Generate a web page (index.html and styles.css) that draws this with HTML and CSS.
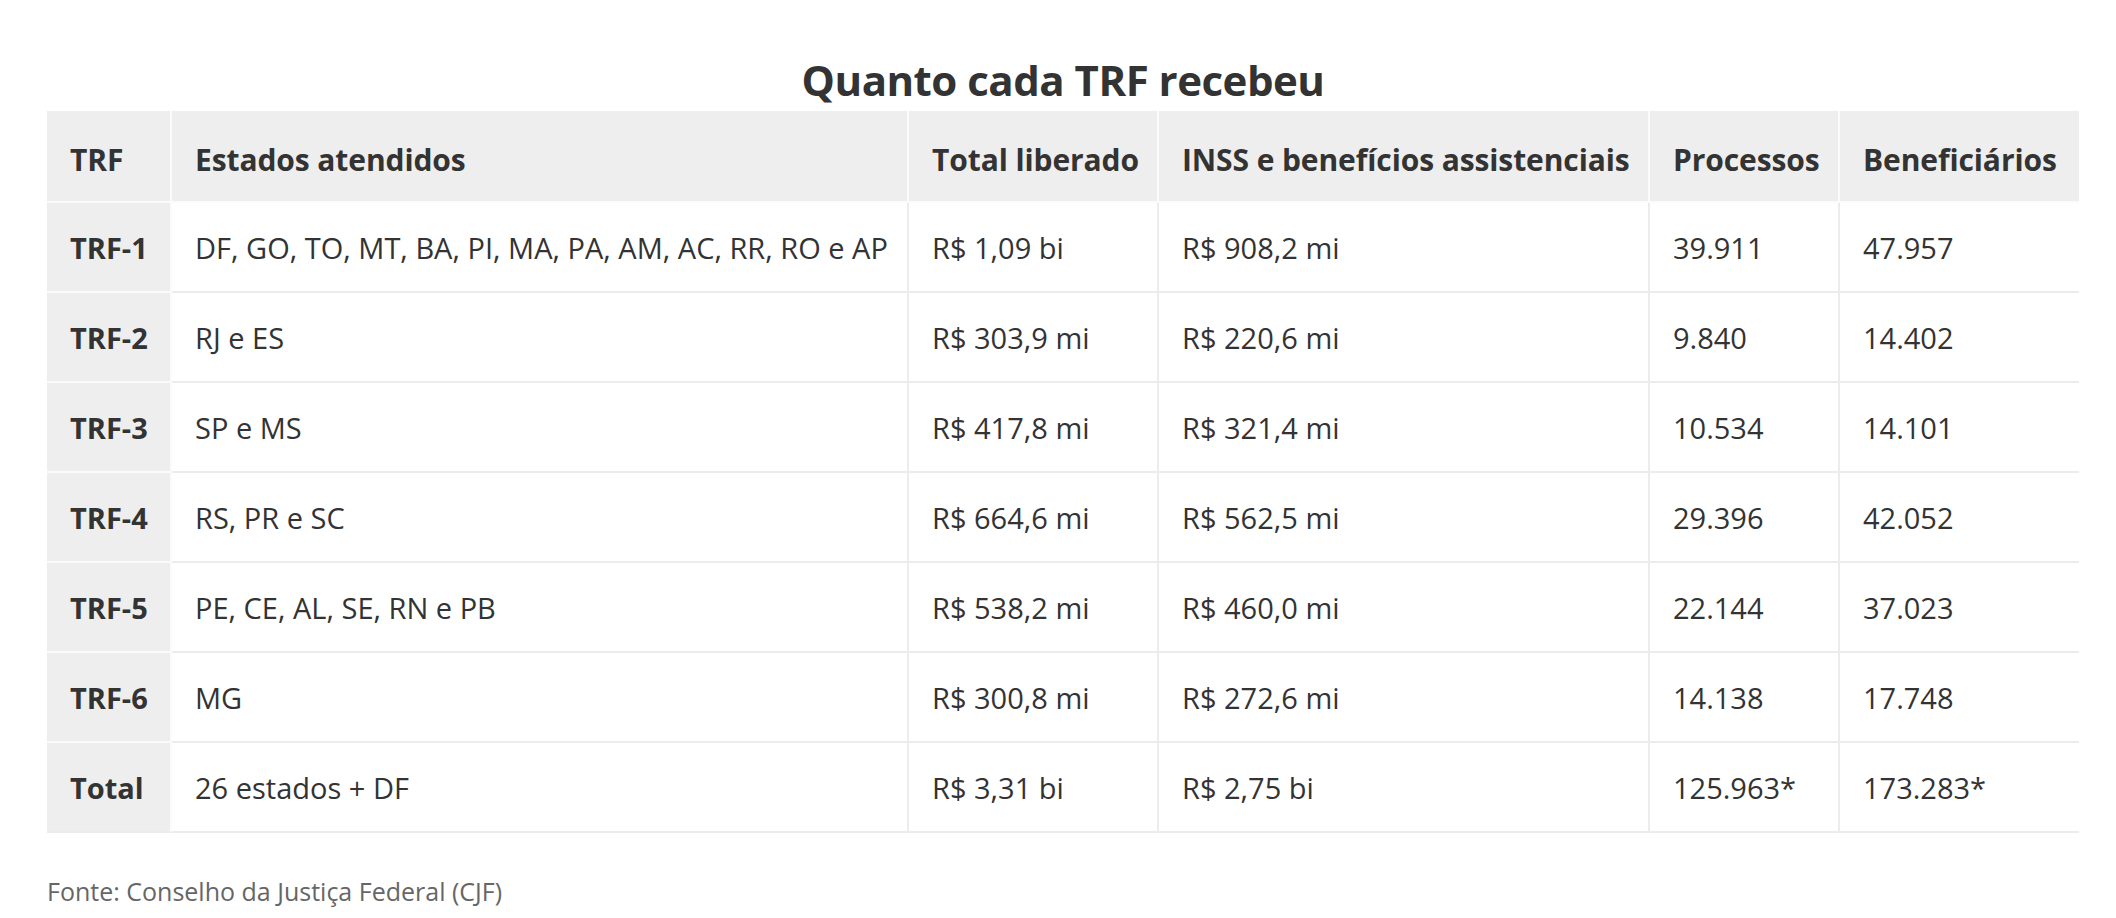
FILE: index.html
```html
<!DOCTYPE html>
<html lang="pt-BR">
<head>
<meta charset="utf-8">
<title>Quanto cada TRF recebeu</title>
<link rel="stylesheet" href="styles.css">
</head>
<body>
<div class="wrap">
  <h1 class="title">Quanto cada TRF recebeu</h1>
  <table class="tbl">
    <colgroup>
      <col class="c1"><col class="c2"><col class="c3"><col class="c4"><col class="c5"><col class="c6">
    </colgroup>
    <thead>
      <tr><th>TRF</th><th>Estados atendidos</th><th>Total liberado</th><th>INSS e benefícios assistenciais</th><th>Processos</th><th>Beneficiários</th></tr>
    </thead>
    <tbody>
      <tr><td class="rh">TRF-1</td><td>DF, GO, TO, MT, BA, PI, MA, PA, AM, AC, RR, RO e AP</td><td>R$ 1,09 bi</td><td>R$ 908,2 mi</td><td>39.911</td><td>47.957</td></tr>
      <tr><td class="rh">TRF-2</td><td>RJ e ES</td><td>R$ 303,9 mi</td><td>R$ 220,6 mi</td><td>9.840</td><td>14.402</td></tr>
      <tr><td class="rh">TRF-3</td><td>SP e MS</td><td>R$ 417,8 mi</td><td>R$ 321,4 mi</td><td>10.534</td><td>14.101</td></tr>
      <tr><td class="rh">TRF-4</td><td>RS, PR e SC</td><td>R$ 664,6 mi</td><td>R$ 562,5 mi</td><td>29.396</td><td>42.052</td></tr>
      <tr><td class="rh">TRF-5</td><td>PE, CE, AL, SE, RN e PB</td><td>R$ 538,2 mi</td><td>R$ 460,0 mi</td><td>22.144</td><td>37.023</td></tr>
      <tr><td class="rh">TRF-6</td><td>MG</td><td>R$ 300,8 mi</td><td>R$ 272,6 mi</td><td>14.138</td><td>17.748</td></tr>
      <tr><td class="rh">Total</td><td>26 estados + DF</td><td>R$ 3,31 bi</td><td>R$ 2,75 bi</td><td>125.963*</td><td>173.283*</td></tr>
    </tbody>
  </table>
  <p class="source">Fonte: Conselho da Justiça Federal (CJF)</p>
</div>
</body>
</html>
```
FILE: styles.css
```css
html, body {
  margin: 0;
  padding: 0;
  background: #ffffff;
}
body {
  font-family: "Open Sans", "Liberation Sans", sans-serif;
  color: #333333;
}
.wrap {
  width: 2032px;
  margin-left: 47px;
  padding-top: 55px;
}
.title {
  margin: 0;
  height: 56px;
  font-size: 42px;
  line-height: 50px;
  font-weight: 700;
  text-align: center;
  letter-spacing: -0.5px;
  color: #333333;
}
.tbl {
  width: 2032px;
  table-layout: fixed;
  border-collapse: separate;
  border-spacing: 0;
}
.c1 { width: 125px; }
.c2 { width: 737px; }
.c3 { width: 250px; }
.c4 { width: 491px; }
.c5 { width: 190px; }
.c6 { width: 239px; }
.tbl th,
.tbl td {
  text-align: left;
  vertical-align: middle;
  padding: 0 0 0 23px;
  white-space: nowrap;
  font-size: 29px;
}
.tbl th {
  height: 84px;
  padding-top: 6px;
  background: #eeeeee;
  font-weight: 700;
  font-size: 30px;
  letter-spacing: -0.1px;
  border-right: 2px solid #fbfbfb;
  border-bottom: 2px solid #fbfbfb;
}
.tbl td {
  height: 88px;
  font-weight: 400;
  border-right: 2px solid #ececec;
  border-bottom: 2px solid #ececec;
}
.tbl th:last-child,
.tbl td:last-child {
  border-right: none;
}
.tbl td.rh {
  background: #eeeeee;
  font-weight: 700;
  border-right: 2px solid #fbfbfb;
  border-bottom: 2px solid #fbfbfb;
}
.tbl tbody tr:last-child td.rh {
  border-bottom: 2px solid #ececec;
}
.source {
  margin: 42px 0 0 0;
  font-size: 25px;
  line-height: 32px;
  color: #666666;
}
```
